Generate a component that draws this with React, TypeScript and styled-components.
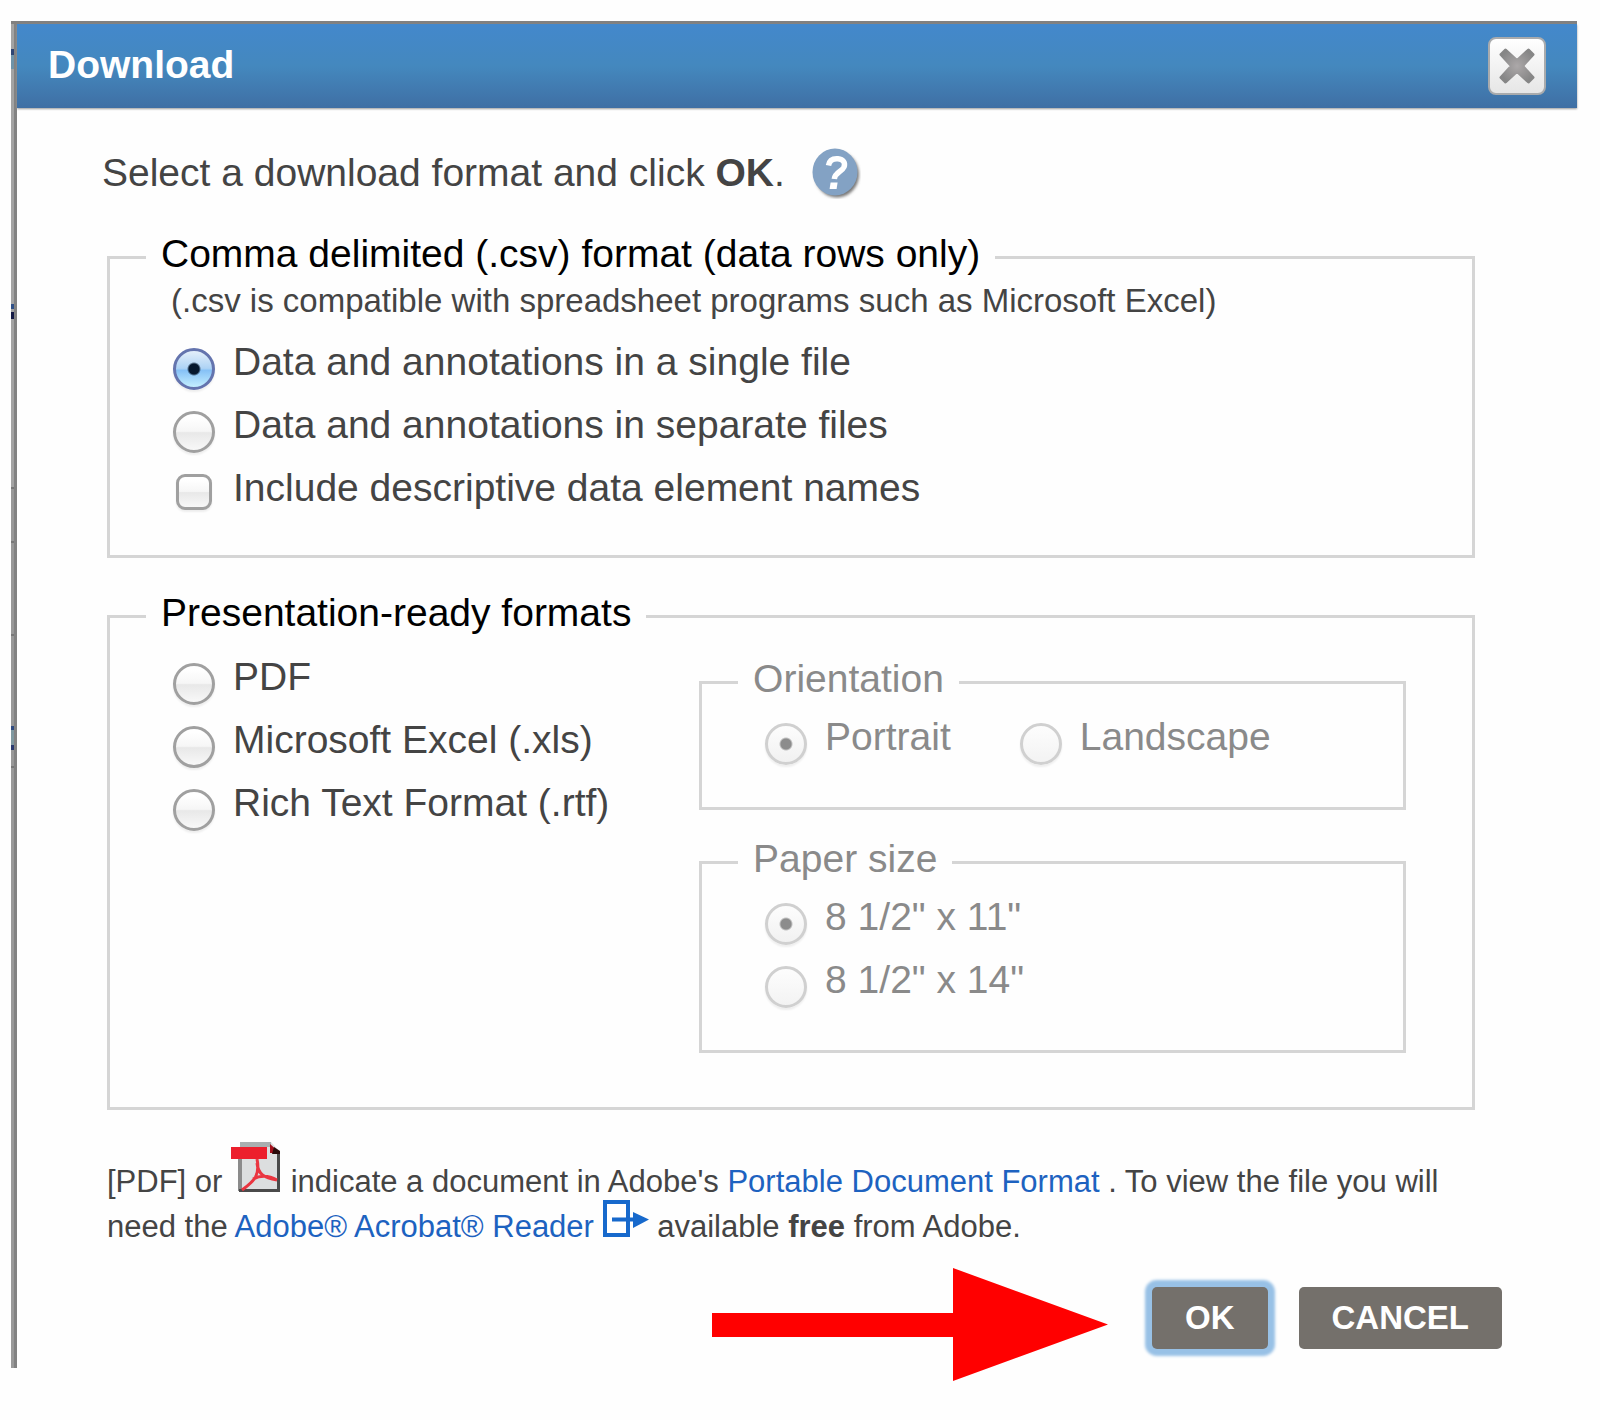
import React from "react";
import styled, { createGlobalStyle, css } from "styled-components";

const GlobalStyle = createGlobalStyle`
  * { box-sizing: border-box; }
  body {
    margin: 0;
    background: #fefefe;
    color: #444;
    font-family: "Liberation Sans", Arial, Helvetica, sans-serif;
    font-size: 39px;
    line-height: 48px;
  }
`;

const Page = styled.div`
  padding: 21px 23px 51px 11px;
`;

/* The left border shows a sliver of the dimmed page behind the dialog. */
const Dialog = styled.section`
  padding: 3px 0 19px 6px;
  background:
    linear-gradient(#808080, #808080) 0 0 / 100% 3px no-repeat,
    linear-gradient(90deg, transparent 3px, #828282 3px) 0 0 / 6px 100% no-repeat,
    linear-gradient(
      #a3a3a3 28px, #2f4675 28px 34px, #6f93a8 34px 48px,
      #a3a3a3 48px 283px, #2f4f86 283px 288px, #a3a3a3 288px 291px,
      #141a45 291px 298px, #a3a3a3 298px 466px, #777 466px 468px,
      #989898 468px 520px, #777 520px 522px, #989898 522px 613px,
      #777 613px 615px, #989898 615px 705px, #2f4a80 705px 709px,
      #7f98a0 709px 724px, #2a3a70 724px 729px, #989898 729px 745px,
      #777 745px 747px, #999 747px
    ) 0 0 / 3px 100% no-repeat,
    #fefefe;
`;

const Header = styled.header`
  display: flex;
  align-items: center;
  justify-content: space-between;
  height: 84px;
  padding: 0 31px 0 31px;
  background: linear-gradient(#4388cc, #4488be 50%, #3f6fa4);
  box-shadow: 0 1px 2px #999;
`;

const Title = styled.h1`
  margin: 0;
  padding-bottom: 3px;
  color: #fff;
  font-size: 39px;
  line-height: 48px;
  font-weight: bold;
`;

const CloseButton = styled.button`
  display: flex;
  width: 58px;
  height: 58px;
  padding: 0;
  align-items: center;
  justify-content: center;
  border: 2px solid #a9abad;
  border-radius: 8px;
  background: linear-gradient(#fff, #e6e6e6);
`;

const Content = styled.form`
  padding: 40px 102px 0 90px;
`;

const Intro = styled.p`
  display: flex;
  align-items: center;
  gap: 26px;
  height: 50px;
  margin: 0 0 32px -5px;
`;

const Help = styled.button`
  display: flex;
  padding: 0;
  border: 0;
  background: none;
`;

const Group = styled.fieldset<{ $nested?: boolean }>`
  min-width: 0;
  margin: 0;
  padding: 0 36px ${(p) => (p.$nested ? 42 : 39)}px;
  border: 3px solid #d5d5d5;
  color: ${(p) => (p.$nested ? "#8a8a8a" : "#444")};
`;

const Legend = styled.legend<{ $muted?: boolean }>`
  padding: 0 15px 6px;
  color: ${(p) => (p.$muted ? "#8a8a8a" : "#000")};
`;

const Hint = styled.p`
  margin: 0 0 20px 25px;
  font-size: 33px;
  line-height: 34px;
`;

const Options = styled.div<{ $inline?: boolean; $top?: number }>`
  display: flex;
  flex-direction: ${(p) => (p.$inline ? "row" : "column")};
  gap: ${(p) => (p.$inline ? "11px 69px" : "11px")};
  padding: ${(p) => p.$top ?? 0}px 0 0 27px;
`;

const Option = styled.label`
  display: flex;
  align-items: flex-start;
  gap: 18px;
  height: 52px;
`;

const control = css`
  flex: none;
  appearance: none;
  border: 3px solid #a0a0a0;
  background: linear-gradient(#fff 10%, #f6f6f6 48%, #e8e8e8 52%, #f8f8f8);
  box-shadow: 0 2px 2px #eee;
  &:disabled {
    border-color: #d0d0d0;
    background: linear-gradient(#fdfdfd, #f3f3f3);
  }
`;

const Radio = styled.input`
  ${control}
  width: 42px;
  height: 42px;
  margin: 10px 0 0;
  border-radius: 50%;
  &:checked:enabled {
    border-color: #6474ae;
    background:
      radial-gradient(circle, #06182e 5px, transparent 7px),
      linear-gradient(#e4effa, #aed3f5 48%, #86c1f6 54%, #c4efff);
  }
  &:checked:disabled {
    background:
      radial-gradient(circle, #8c8c8c 5px, transparent 7px),
      linear-gradient(#fdfdfd, #f1f1f1);
  }
`;

const Checkbox = styled.input`
  ${control}
  width: 36px;
  height: 36px;
  margin: 10px 3px 0;
  border-radius: 9px;
`;

const Columns = styled.div`
  display: grid;
  grid-template-columns: 32fr 43fr;
  padding: 10px 30px 15px 27px;
`;

const FormatList = styled(Options)`
  padding: 0;
`;

const PageSetup = styled.div`
  display: flex;
  flex-direction: column;
  gap: 25px;
  padding-top: 2px;
`;

const Stack = styled.div`
  display: flex;
  flex-direction: column;
  gap: 31px;
`;

const Note = styled.p`
  margin: 35px 0 0;
  font-size: 31px;
  line-height: 45px;
`;

const Link = styled.a`
  color: #1d62c0;
  text-decoration: none;
`;

const InlineIcon = styled.svg`
  vertical-align: baseline;
  margin-top: -4px;
`;

const Footer = styled.footer`
  display: flex;
  justify-content: flex-end;
  margin: 38px -27px 0 0;
`;

const Actions = styled.div`
  position: relative;
  display: flex;
  gap: 31px;
`;

const ActionButton = styled.button<{ $focused?: boolean }>`
  height: 62px;
  padding: 0 33px;
  border: 0;
  border-radius: 5px;
  background: #74706b;
  color: #fff;
  font: bold 33px/60px "Liberation Sans", Arial, sans-serif;
  box-shadow: ${(p) => (p.$focused ? "0 0 3px 7px #98c1e6" : "none")};
`;

const Pointer = styled.svg`
  position: absolute;
  right: calc(100% + 44px);
  top: -19px;
`;

interface ChoiceProps {
  name: string;
  label: string;
  checked?: boolean;
  disabled?: boolean;
}

const Choice = ({ name, label, checked, disabled }: ChoiceProps) => (
  <Option>
    <Radio type="radio" name={name} defaultChecked={checked} disabled={disabled} />
    <span>{label}</span>
  </Option>
);

export default function App() {
  return (
    <Page>
      <GlobalStyle />
      <Dialog role="dialog" aria-labelledby="dialog-title">
        <Header>
          <Title id="dialog-title">Download</Title>
          <CloseButton type="button" aria-label="Close">
            <svg width="36" height="36" viewBox="0 0 36 36">
              <defs>
                <radialGradient id="cross" gradientUnits="userSpaceOnUse" cx="18" cy="18" r="18">
                  <stop offset="0" stopColor="#aca8a9" />
                  <stop offset="1" stopColor="#868686" />
                </radialGradient>
              </defs>
              <path
                d="M6.5 2 L18 12.5 L29.5 2 L34 6.5 L23.5 18 L34 29.5 L29.5 34 L18 23.5 L6.5 34 L2 29.5 L12.5 18 L2 6.5 Z"
                fill="url(#cross)"
                stroke="url(#cross)"
                strokeWidth="3"
                strokeLinejoin="round"
              />
            </svg>
          </CloseButton>
        </Header>

        <Content onSubmit={(e) => e.preventDefault()}>
          <Intro>
            <span>
              Select a download format and click <b>OK</b>.
            </span>
            <Help type="button" aria-label="Help">
              <svg width="50" height="52" viewBox="0 0 50 52">
                <defs>
                  <filter id="soft" x="-20%" y="-20%" width="140%" height="140%">
                    <feGaussianBlur stdDeviation="1.6" />
                  </filter>
                </defs>
                <ellipse cx="26" cy="27.5" rx="22" ry="23" fill="#777" filter="url(#soft)" />
                <ellipse cx="24" cy="25" rx="22.5" ry="23.5" fill="#83a2c4" />
                <path
                  d="M17.5 18.5 C18.5 12.5 23 11.5 27 11.8 C32.5 12.3 34.5 16 33 20 C31 24.8 24 25 23.3 32"
                  fill="none"
                  stroke="#fff"
                  strokeWidth="5.5"
                />
                <path d="M19.6 35.5 h7 l-1 6.5 h-7 z" fill="#fff" />
              </svg>
            </Help>
          </Intro>

          <Stack>
            <Group>
              <Legend>Comma delimited (.csv) format (data rows only)</Legend>
              <Hint>(.csv is compatible with spreadsheet programs such as Microsoft Excel)</Hint>
              <Options>
                <Choice name="format" label="Data and annotations in a single file" checked />
                <Choice name="format" label="Data and annotations in separate files" />
                <Option>
                  <Checkbox type="checkbox" name="descriptive" />
                  <span>Include descriptive data element names</span>
                </Option>
              </Options>
            </Group>

            <Group>
              <Legend>Presentation-ready formats</Legend>
              <Columns>
                <FormatList>
                  <Choice name="format" label="PDF" />
                  <Choice name="format" label="Microsoft Excel (.xls)" />
                  <Choice name="format" label="Rich Text Format (.rtf)" />
                </FormatList>
                <PageSetup>
                  <Group $nested>
                    <Legend $muted>Orientation</Legend>
                    <Options $inline $top={4}>
                      <Choice name="orientation" label="Portrait" checked disabled />
                      <Choice name="orientation" label="Landscape" disabled />
                    </Options>
                  </Group>
                  <Group $nested>
                    <Legend $muted>Paper size</Legend>
                    <Options $top={4}>
                      <Choice name="paper" label={'8 1/2" x 11"'} checked disabled />
                      <Choice name="paper" label={'8 1/2" x 14"'} disabled />
                    </Options>
                  </Group>
                </PageSetup>
              </Columns>
            </Group>
          </Stack>

          <Note>
            [PDF] or{" "}
            <InlineIcon width="51" height="51" viewBox="0 0 51 51" role="img" aria-label="PDF">
              <path d="M9 1 H40 L48 10 V50 H9 Z" fill="#dcdedf" />
              <path d="M9 1 H40 V6 H9 Z" fill="#a9afb0" />
              <path d="M7 17 H11 V50 H7 Z" fill="#8b8b8b" />
              <path d="M46 10 H49 V51 H8 V48 H46 Z" fill="#4a4a4a" />
              <path d="M39 3 L49 12 H39 Z" fill="#a3101c" />
              <path d="M43 6 L49 10 V13 H41 Z" fill="#2a0a0a" />
              <path d="M0 6 H36 V18 H0 Z" fill="#ec1f2d" />
              <path
                d="M26 18 C27.5 25 27 31 24.5 36 C21 42 15 46 11 49 M26 22 C27 33 33 37 46 39 M22 38 C30 34 39 35 46 39"
                fill="none"
                stroke="#ea3540"
                strokeWidth="3"
              />
            </InlineIcon>{" "}
            indicate a document in Adobe's <Link href="#pdf">Portable Document Format</Link> . To view
            the file you will
            <br />
            need the{" "}
            <Link href="#reader">
              Adobe® Acrobat® Reader{" "}
              <InlineIcon width="46" height="37" viewBox="0 0 46 37" aria-hidden="true">
                <path d="M2 2 H25 V35 H2 Z" fill="#fff" stroke="#1769cc" strokeWidth="4" />
                <path d="M9 17.5 H30 V21.5 H9 Z M30 12 L46 19.5 L30 28 Z" fill="#1769cc" />
              </InlineIcon>
            </Link>{" "}
            available <b>free</b> from Adobe.
          </Note>

          <Footer>
            <Actions>
              <Pointer width="396" height="113" viewBox="0 0 396 113" aria-hidden="true">
                <path d="M0 45 H241 V0 L396 56.5 L241 113 V69 H0 Z" fill="#f00" />
              </Pointer>
              <ActionButton type="submit" $focused>
                OK
              </ActionButton>
              <ActionButton type="button">CANCEL</ActionButton>
            </Actions>
          </Footer>
        </Content>
      </Dialog>
    </Page>
  );
}
